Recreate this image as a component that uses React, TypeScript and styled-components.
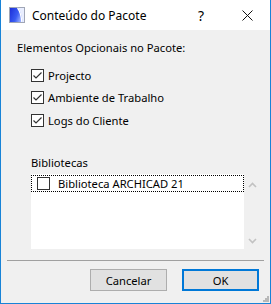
import React from 'react';
import styled, { createGlobalStyle } from 'styled-components';

const GlobalStyle = createGlobalStyle`
  html, body {
    margin: 0;
    padding: 0;
    background: #ffffff;
  }
  body {
    font-family: "Segoe UI", "Noto Sans", "Liberation Sans", sans-serif;
    font-size: 11.2px;
    color: #000000;
  }
`;

const options = ['Projecto', 'Ambiente de Trabalho', 'Logs do Cliente'];

function AppIcon() {
  return (
    <svg width="16" height="16" viewBox="0 0 16 16">
      <defs>
        <linearGradient id="ag" x1="0" y1="0" x2="1" y2="0.4">
          <stop offset="0" stopColor="#1c2fd8" />
          <stop offset="0.6" stopColor="#3a5cf2" />
          <stop offset="1" stopColor="#9fb4ff" />
        </linearGradient>
      </defs>
      <rect x="0.5" y="0.5" width="15" height="15" fill="#ffffff" stroke="#a0a6b6" />
      <rect x="1" y="1" width="14" height="14" fill="url(#ag)" />
      <path d="M9 1 L15 1 L15 15 L13.5 15 C13 9 11.5 4 9 1 Z" fill="#e9eeff" />
      <path d="M8.5 1 C11 4 12.3 9 12.8 15" fill="none" stroke="#ffffff" strokeWidth="1.2" />
    </svg>
  );
}

function Check({ checked }: { checked: boolean }) {
  return (
    <CheckBox>
      {checked && (
        <svg width="11" height="11" viewBox="0 0 11 11">
          <path d="M1.5 5.5 L4 8 L9.5 2.5" fill="none" stroke="#333333" strokeWidth="1.2" />
        </svg>
      )}
    </CheckBox>
  );
}

function Chevron({ up }: { up: boolean }) {
  return (
    <svg width="9" height="6" viewBox="0 0 9 6">
      <path
        d={up ? 'M1 5 L4.5 1.5 L8 5' : 'M1 1 L4.5 4.5 L8 1'}
        fill="none"
        stroke="#c2c2c2"
        strokeWidth="1.6"
      />
    </svg>
  );
}

export default function App() {
  return (
    <>
      <GlobalStyle />
      <Window>
        <TitleBar>
          <AppIcon />
          <Title>Conteúdo do Pacote</Title>
          <TitleButton>?</TitleButton>
          <CloseButton>
            <svg width="11" height="11" viewBox="0 0 11 11">
              <path d="M0.5 0.5 L10.5 10.5 M10.5 0.5 L0.5 10.5" stroke="#111" strokeWidth="1" />
            </svg>
          </CloseButton>
        </TitleBar>
        <Body>
          <SectionLabel>Elementos Opcionais no Pacote:</SectionLabel>
          <OptionList>
            {options.map((o) => (
              <OptionRow key={o}>
                <Check checked />
                <span>{o}</span>
              </OptionRow>
            ))}
          </OptionList>
          <LibLabel>Bibliotecas</LibLabel>
          <LibArea>
            <ListBox>
              <ListItem>
                <Check checked={false} />
                <span>Biblioteca ARCHICAD 21</span>
              </ListItem>
            </ListBox>
            <ScrollBar>
              <Chevron up />
              <Chevron up={false} />
            </ScrollBar>
          </LibArea>
        </Body>
        <Separator />
        <Footer>
          <DialogButton>Cancelar</DialogButton>
          <DialogButton primary>OK</DialogButton>
          <Grip>
            <svg width="6" height="6" viewBox="0 0 6 6">
              <rect x="4" y="0" width="2" height="2" fill="#b8b8b8" />
              <rect x="2" y="2" width="2" height="2" fill="#b8b8b8" />
              <rect x="4" y="2" width="2" height="2" fill="#b8b8b8" />
              <rect x="0" y="4" width="2" height="2" fill="#b8b8b8" />
              <rect x="2" y="4" width="2" height="2" fill="#b8b8b8" />
              <rect x="4" y="4" width="2" height="2" fill="#b8b8b8" />
            </svg>
          </Grip>
        </Footer>
      </Window>
    </>
  );
}

const Window = styled.div`
  width: 271px;
  height: 304px;
  box-sizing: border-box;
  border: 1px solid #1883d7;
  border-top: none;
  background: #f0f0f0;
  display: flex;
  flex-direction: column;
`;

const TitleBar = styled.div`
  height: 30px;
  background: #ffffff;
  display: flex;
  align-items: center;
  padding-left: 8px;
`;

const Title = styled.div`
  margin-left: 7px;
  flex: 1;
  font-size: 12px;
  color: #000;
`;

const TitleButton = styled.div`
  width: 46px;
  text-align: center;
  font-size: 14px;
`;

const CloseButton = styled.div`
  width: 46px;
  display: flex;
  justify-content: center;
`;

const Body = styled.div`
  flex: 1;
  padding: 10px 0 0 16px;
  display: flex;
  flex-direction: column;
`;

const SectionLabel = styled.div`
  height: 16px;
  line-height: 16px;
`;

const OptionList = styled.div`
  display: flex;
  flex-direction: column;
  gap: 6.5px;
  padding: 11px 0 0 14px;
`;

const OptionRow = styled.div`
  display: flex;
  align-items: center;
  gap: 4px;
  height: 16px;
`;

const CheckBox = styled.div`
  width: 13px;
  height: 13px;
  box-sizing: border-box;
  border: 1px solid #333333;
  background: #ffffff;
  display: flex;
  align-items: center;
  justify-content: center;
`;

const LibLabel = styled.div`
  margin: 27px 0 0 14px;
  height: 16px;
  line-height: 16px;
`;

const LibArea = styled.div`
  display: flex;
  margin: 3px 0 0 14px;
  height: 75px;
`;

const ListBox = styled.div`
  width: 213px;
  background: #ffffff;
  padding-top: 1px;
`;

const ListItem = styled.div`
  height: 17px;
  box-sizing: border-box;
  border: 1px dotted #000;
  display: flex;
  align-items: center;
  gap: 8px;
  padding-left: 5px;
`;

const ScrollBar = styled.div`
  width: 17px;
  display: flex;
  flex-direction: column;
  justify-content: space-between;
  align-items: center;
  padding: 8px 0 5px;
`;

const Separator = styled.div`
  height: 1px;
  background: #a0a0a0;
  margin: 0 6px;
`;

const Footer = styled.div`
  height: 42px;
  display: flex;
  justify-content: flex-end;
  align-items: flex-start;
  gap: 15px;
  padding: 8px 11px 0 0;
  box-sizing: border-box;
  position: relative;
`;

const DialogButton = styled.div<{ primary?: boolean }>`
  width: 77px;
  height: 22px;
  box-sizing: border-box;
  background: #e1e1e1;
  border: ${(p) => (p.primary ? '2px solid #0078d7' : '1px solid #adadad')};
  display: flex;
  align-items: center;
  justify-content: center;
`;

const Grip = styled.div`
  position: absolute;
  right: 1px;
  bottom: 1px;
  line-height: 0;
`;
